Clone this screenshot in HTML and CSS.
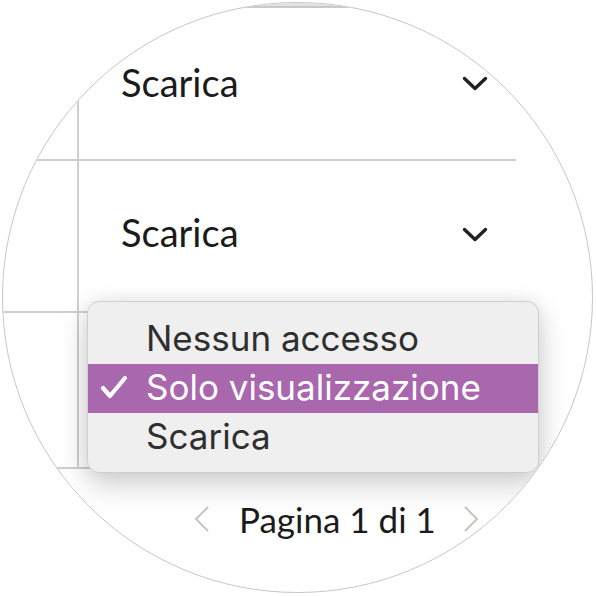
FILE: index.html
```html
<!DOCTYPE html>
<html lang="it">
<head>
<meta charset="utf-8">
<title>Permessi</title>
<link rel="stylesheet" href="styles.css">
</head>
<body>
<div class="lens">
  <div class="head"></div>
  <div class="table">
    <div class="row r1">
      <div class="c0"></div>
      <div class="c1"><span class="val">Scarica</span>
        <svg class="chev" width="26" height="15" viewBox="0 0 26 15"><polyline points="2.5,2.5 13,12.5 23.5,2.5" fill="none" stroke="#222222" stroke-width="3.4" stroke-linecap="round" stroke-linejoin="round"/></svg>
      </div>
    </div>
    <div class="row r2">
      <div class="c0"></div>
      <div class="c1"><span class="val">Scarica</span>
        <svg class="chev" width="26" height="15" viewBox="0 0 26 15"><polyline points="2.5,2.5 13,12.5 23.5,2.5" fill="none" stroke="#222222" stroke-width="3.4" stroke-linecap="round" stroke-linejoin="round"/></svg>
      </div>
    </div>
    <div class="row r3">
      <div class="c0"></div>
      <div class="c1"></div>
    </div>
  </div>
  <div class="pager">
    <svg class="pchev" width="18" height="28" viewBox="0 0 18 28"><polyline points="15,2 3,14 15,26" fill="none" stroke="#cbc3bf" stroke-width="2"/></svg>
    <span class="ptext">Pagina 1 di 1</span>
    <svg class="pchev" width="18" height="28" viewBox="0 0 18 28"><polyline points="3,2 15,14 3,26" fill="none" stroke="#cbc3bf" stroke-width="2"/></svg>
  </div>
  <div class="menu">
    <div class="item">Nessun accesso</div>
    <div class="item sel">
      <svg class="check" width="30" height="26" viewBox="0 0 30 26"><polyline points="4,14 11,22 26,4" fill="none" stroke="#ffffff" stroke-width="4.2" stroke-linecap="round" stroke-linejoin="round"/></svg>
      Solo visualizzazione</div>
    <div class="item">Scarica</div>
  </div>
</div>
</body>
</html>
```

FILE: styles.css
```css
html, body {
  margin: 0;
  padding: 0;
  background: #ffffff;
}
body {
  width: 596px;
  height: 596px;
  padding: 2px;
  box-sizing: border-box;
}
.lens {
  position: relative;
  width: 591px;
  height: 591px;
  box-sizing: border-box;
  border: 1px solid #c7c7c7;
  border-radius: 50%;
  overflow: hidden;
  background: #ffffff;
  font-family: Lato, "Liberation Sans", sans-serif;
}
.head {
  height: 3px;
  background: #e2e2e2;
  border-bottom: 2px solid #c9c9c9;
}
.table {
  width: 513px;
}
.row {
  display: flex;
  border-bottom: 2px solid #cfcfcf;
}
.r1 { height: 151px; }
.r2 { height: 150px; }
.r3 { height: 154px; }
.c0 {
  width: 74px;
  flex: none;
  border-right: 2px solid #cfcfcf;
}
.c1 {
  flex: 1;
  display: flex;
  align-items: center;
  justify-content: space-between;
  padding: 0 28px 0 42px;
}
.r1 .c1 { padding-bottom: 4px; }
.r2 .c1 { padding-bottom: 8px; }
.val {
  font-size: 38px;
  color: #1b1b1b;
}
.chev {
  display: block;
  margin-top: 4px;
}
.pager {
  display: flex;
  align-items: center;
  margin-left: 190px;
  margin-top: 29px;
}
.pchev { display: block; }
.ptext {
  font-size: 35px;
  color: #1b1b1b;
  margin: 0 26px 0 28px;
}
.menu {
  position: absolute;
  left: 84px;
  top: 298px;
  width: 452px;
  height: 172px;
  box-sizing: border-box;
  padding-top: 13px;
  background: #efefef;
  border: 1px solid #cfcfcf;
  border-radius: 12px;
  box-shadow: 0 12px 30px rgba(0,0,0,0.18), 0 0 18px rgba(0,0,0,0.08);
  font-family: Inter, "Noto Sans", sans-serif;
  overflow: hidden;
}
.item {
  position: relative;
  height: 49px;
  line-height: 47px;
  padding-left: 58px;
  font-size: 35px;
  font-weight: 400;
  color: #2f2f2f;
}
.item.sel {
  background: #a967ae;
  color: #ffffff;
}
.check {
  position: absolute;
  left: 11px;
  top: 10px;
}
```
